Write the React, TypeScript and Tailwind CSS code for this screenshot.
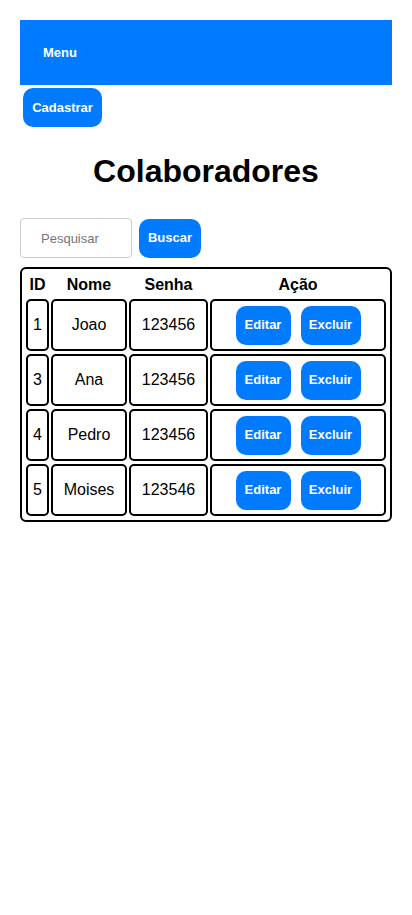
import React from 'react';

const colaboradores = [
    { id: 1, nome: 'Joao', senha: '123456' },
    { id: 3, nome: 'Ana', senha: '123456' },
    { id: 4, nome: 'Pedro', senha: '123456' },
    { id: 5, nome: 'Moises', senha: '123546' },
];

const App = () => {
    return (
        <div className="min-h-[915px] bg-white p-5 text-black" style={{ fontFamily: '"Liberation Sans", Arial, sans-serif' }}>
            <div className="flex h-[65px] items-center bg-[#007bff] pl-[23px] text-[13px] font-bold text-white">
                Menu
            </div>
            <button className="ml-[3px] mt-[3px] flex h-[39px] w-[79px] items-center justify-center rounded-[10px] bg-[#007bff] text-[13px] font-bold text-white">
                Cadastrar
            </button>

            <h1 className="mt-[26px] text-center text-[32px] font-bold leading-[37px]">Colaboradores</h1>

            <div className="mt-[28px] flex items-center gap-[7px]">
                <input
                    placeholder="Pesquisar"
                    className="h-[40px] w-[112px] rounded-[4px] border border-[#cccccc] pl-[20px] text-[13px] placeholder:text-[#757575] outline-none"
                />
                <button className="h-[39px] w-[62px] rounded-[10px] bg-[#007bff] text-[13px] font-bold text-white">
                    Buscar
                </button>
            </div>

            <div className="mt-[9px] rounded-[6px] border-2 border-black p-[4px]">
                <div className="grid grid-cols-[23px_76px_79px_176px] gap-x-[2px] gap-y-[3px]">
                    <div className="flex h-[23px] items-center justify-center text-[16px] font-bold">ID</div>
                    <div className="flex h-[23px] items-center justify-center text-[16px] font-bold">Nome</div>
                    <div className="flex h-[23px] items-center justify-center text-[16px] font-bold">Senha</div>
                    <div className="flex h-[23px] items-center justify-center text-[16px] font-bold">Ação</div>

                    {colaboradores.map((c) => (
                        <React.Fragment key={c.id}>
                            <div className="flex h-[52px] items-center justify-center rounded-[5px] border-2 border-black text-[16px]">{c.id}</div>
                            <div className="flex h-[52px] items-center justify-center rounded-[5px] border-2 border-black text-[16px]">{c.nome}</div>
                            <div className="flex h-[52px] items-center justify-center rounded-[5px] border-2 border-black text-[16px]">{c.senha}</div>
                            <div className="flex h-[52px] items-center justify-center gap-[10px] rounded-[5px] border-2 border-black">
                                <button className="h-[39px] w-[55px] rounded-[10px] bg-[#007bff] text-[13px] font-bold text-white">Editar</button>
                                <button className="h-[39px] w-[60px] rounded-[10px] bg-[#007bff] text-[13px] font-bold text-white">Excluir</button>
                            </div>
                        </React.Fragment>
                    ))}
                </div>
            </div>
        </div>
    );
};

export default App;
